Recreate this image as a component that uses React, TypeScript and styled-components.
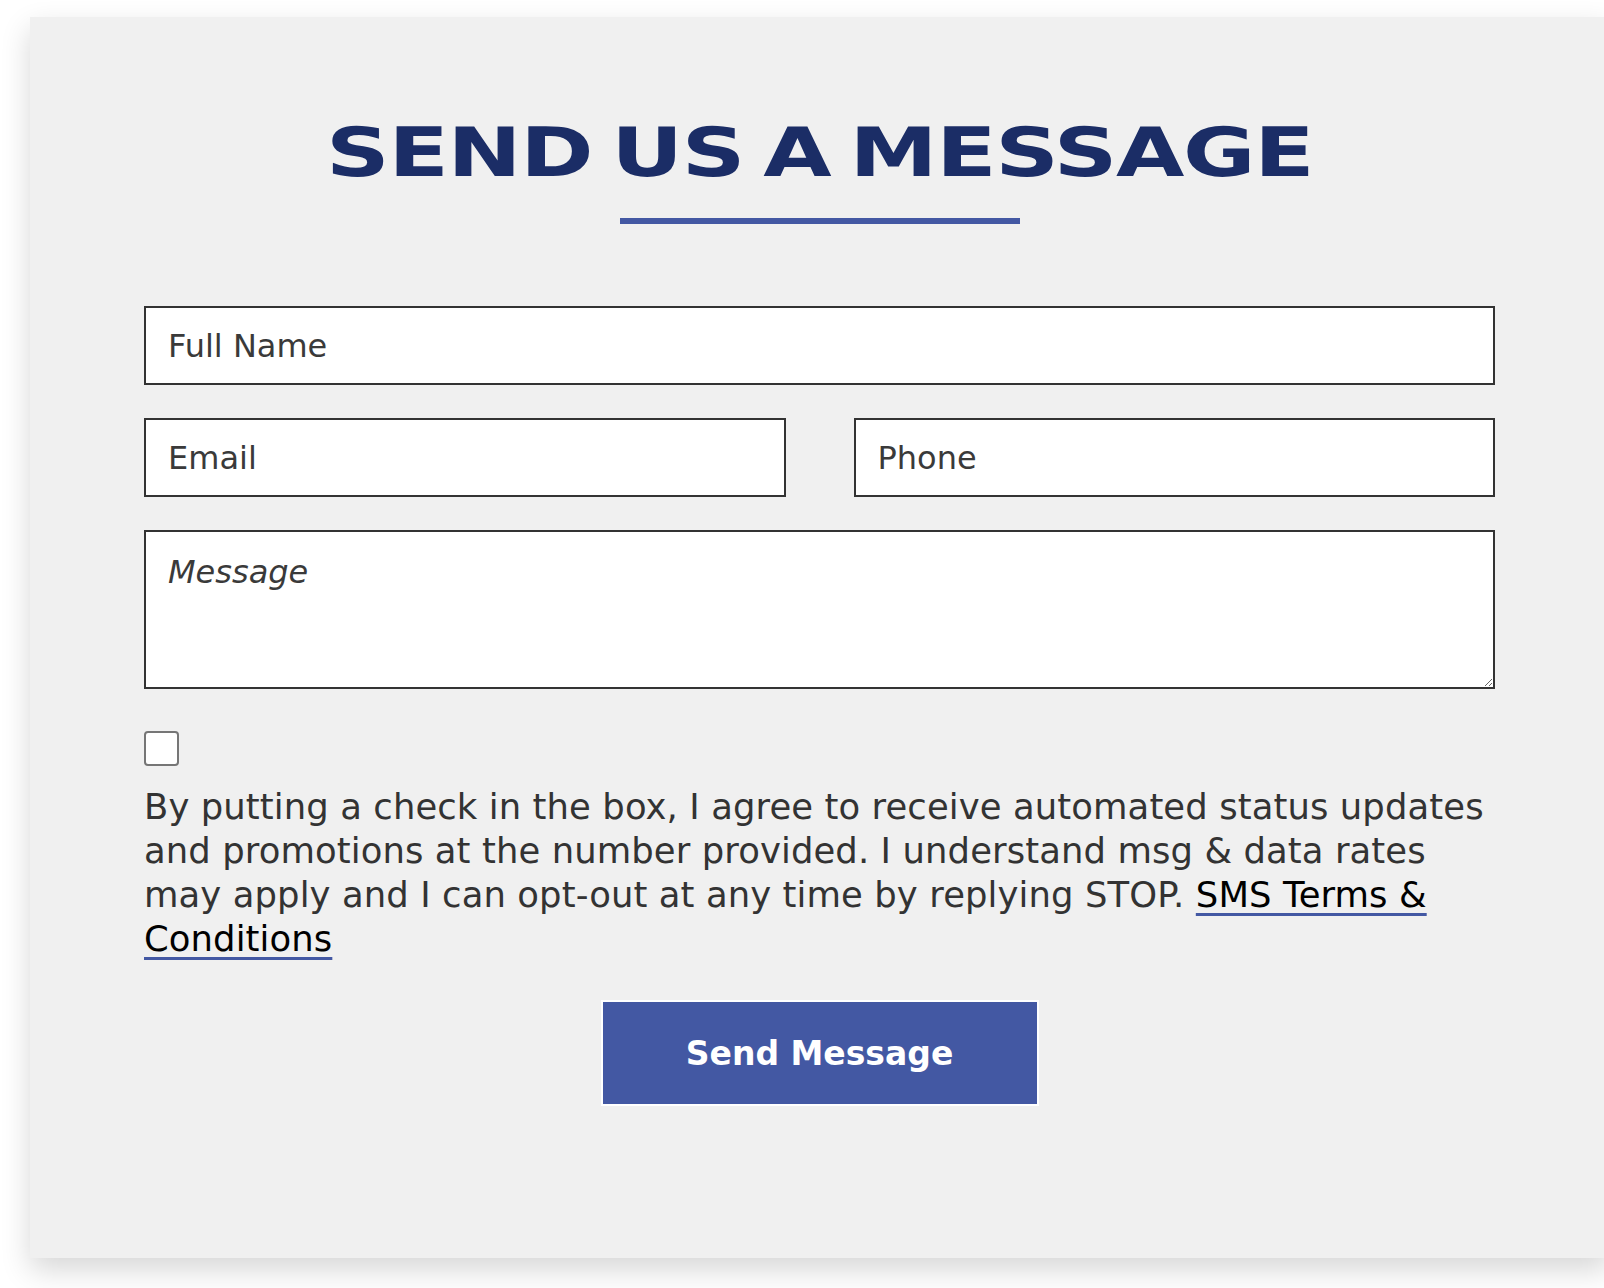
import React from "react";
import styled, { createGlobalStyle } from "styled-components";

const GlobalStyle = createGlobalStyle`
  html, body {
    margin: 0;
    padding: 0;
    background: #ffffff;
    overflow: hidden;
  }
  * { box-sizing: border-box; }
`;

const Page = styled.div`
  width: 1604px;
  height: 1288px;
  padding: 17px 0 0 30px;
  overflow: hidden;
`;

const Card = styled.section`
  width: 1580px;
  height: 1241px;
  background: #f0f0f0;
  box-shadow: 0 12px 28px rgba(0, 0, 0, 0.16);
  padding: 96px 115px 0 114px;
  display: flex;
  flex-direction: column;
  align-items: stretch;
`;

const TitleWrap = styled.div`
  display: flex;
  justify-content: center;
`;

const Title = styled.h2`
  margin: 0;
  display: inline-block;
  font-family: "DejaVu Sans", sans-serif;
  font-weight: 700;
  font-size: 68px;
  line-height: 80px;
  color: #1b2d66;
  letter-spacing: -1px;
  word-spacing: -8px;
  white-space: nowrap;
  transform: scaleX(1.3);
`;

const TitleRule = styled.div`
  width: 400px;
  height: 6px;
  background: #4358a3;
  align-self: center;
  margin-top: 25px;
`;

const Form = styled.form`
  display: flex;
  flex-direction: column;
  gap: 33px;
  margin-top: 82px;
`;

const Row = styled.div`
  display: grid;
  grid-template-columns: 1fr 1fr;
  column-gap: 68px;
`;

const Field = styled.input`
  width: 100%;
  height: 79px;
  border: 2px solid #333333;
  background: #ffffff;
  padding: 0 22px;
  font-family: "DejaVu Sans", sans-serif;
  font-size: 32px;
  color: #333;
  outline: none;
  &::placeholder {
    color: #3a3a3a;
  }
`;

const Area = styled.textarea`
  width: 100%;
  height: 159px;
  border: 2px solid #333333;
  background: #ffffff;
  padding: 21px 22px;
  font-family: "DejaVu Sans", sans-serif;
  font-size: 32px;
  color: #333;
  outline: none;
  resize: vertical;
  display: block;
  &::placeholder {
    color: #3a3a3a;
    font-style: italic;
  }
`;

const Consent = styled.div`
  margin-top: 42px;
  display: flex;
  flex-direction: column;
  align-items: flex-start;
`;

const Box = styled.span`
  width: 35px;
  height: 35px;
  border: 2px solid #767676;
  border-radius: 4px;
  background: #ffffff;
  display: block;
`;

const Legal = styled.p`
  margin: 19px 0 0;
  font-family: "DejaVu Sans", sans-serif;
  font-size: 35.4px;
  line-height: 44px;
  letter-spacing: 0.1px;
  color: #333333;
`;

const TermsLink = styled.a`
  color: #000000;
  text-decoration: underline;
  text-decoration-color: #4358a3;
  text-decoration-thickness: 3px;
  text-underline-offset: 6px;
`;

const Submit = styled.button`
  align-self: center;
  margin-top: 39px;
  width: 438px;
  height: 106px;
  background: #4358a3;
  border: 2px solid #ffffff;
  color: #ffffff;
  font-family: "DejaVu Sans", sans-serif;
  font-weight: 700;
  font-size: 33px;
  cursor: pointer;
`;

export default function App() {
  return (
    <>
      <GlobalStyle />
      <Page>
        <Card>
          <TitleWrap>
            <Title>SEND US A MESSAGE</Title>
          </TitleWrap>
          <TitleRule />
          <Form onSubmit={(e) => e.preventDefault()}>
            <Field placeholder="Full Name" />
            <Row>
              <Field placeholder="Email" />
              <Field placeholder="Phone" />
            </Row>
            <Area placeholder="Message" />
          </Form>
          <Consent>
            <Box />
            <Legal>
              By putting a check in the box, I agree to receive automated status updates and
              promotions at the number provided. I understand msg &amp; data rates may apply and I
              can opt-out at any time by replying STOP.{" "}
              <TermsLink href="#">SMS Terms &amp; Conditions</TermsLink>
            </Legal>
          </Consent>
          <Submit type="button">Send Message</Submit>
        </Card>
      </Page>
    </>
  );
}
